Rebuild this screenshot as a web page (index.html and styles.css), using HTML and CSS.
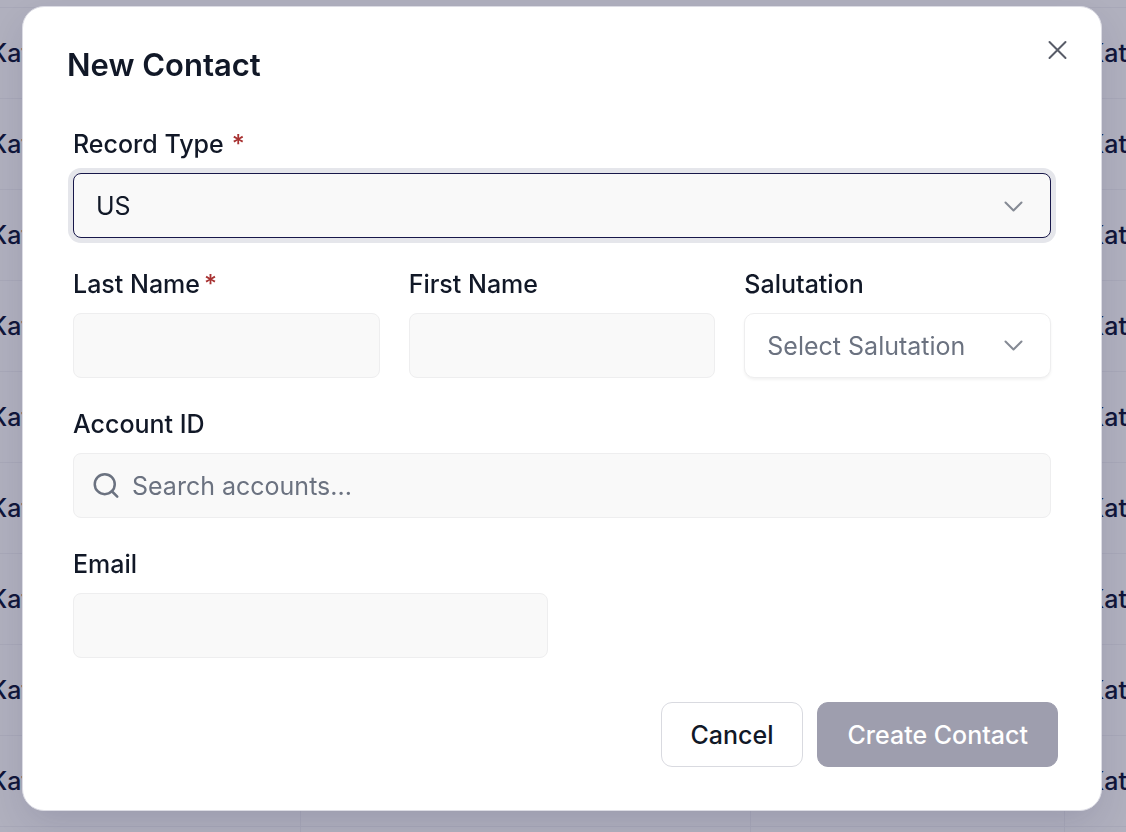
FILE: index.html
```html
<!DOCTYPE html>
<html lang="en">
<head>
<meta charset="utf-8">
<meta name="viewport" content="width=device-width, initial-scale=1">
<title>New Contact</title>
<link rel="stylesheet" href="styles.css">
</head>
<body>
<div class="page">
  <table class="records" aria-hidden="true">
    <colgroup><col class="col-first"><col class="col-wide"><col class="col-mid"><col class="col-last"></colgroup>
    <tbody>
      <tr><td>Kat</td><td></td><td></td><td>Kat</td></tr>
      <tr><td>Kat</td><td></td><td></td><td>Kat</td></tr>
      <tr><td>Kat</td><td></td><td></td><td>Kat</td></tr>
      <tr><td>Kat</td><td></td><td></td><td>Kat</td></tr>
      <tr><td>Kat</td><td></td><td></td><td>Kat</td></tr>
      <tr><td>Kat</td><td></td><td></td><td>Kat</td></tr>
      <tr><td>Kat</td><td></td><td></td><td>Kat</td></tr>
      <tr><td>Kat</td><td></td><td></td><td>Kat</td></tr>
      <tr><td>Kat</td><td></td><td></td><td>Kat</td></tr>
      <tr><td></td><td></td><td></td><td></td></tr>
    </tbody>
  </table>
</div>
<div class="overlay">
  <form class="dialog" role="dialog" aria-labelledby="dialog-title">
    <h1 class="title" id="dialog-title">New Contact</h1>
    <button class="close" type="button" aria-label="Close">
      <svg width="32" height="32" viewBox="0 0 32 32" fill="none" stroke="currentColor" stroke-width="2" stroke-linecap="round"><path d="M8.500 8l16 16M24.500 8l-16 16"/></svg>
    </button>
    <div class="fields">
      <div class="field">
        <label class="label" for="record-type">Record Type <span class="required">*</span></label>
        <div class="control">
          <select class="input focused" id="record-type"><option>US</option></select>
          <svg class="chevron" width="32" height="32" viewBox="0 0 32 32" fill="none" stroke="currentColor" stroke-width="2" stroke-linecap="round" stroke-linejoin="round"><path d="M8.500 12.500l8 8 8-8"/></svg>
        </div>
      </div>
      <div class="row thirds">
        <div class="field">
          <label class="label tight" for="last-name">Last Name<span class="required">*</span></label>
          <input class="input" id="last-name" type="text">
        </div>
        <div class="field">
          <label class="label" for="first-name">First Name</label>
          <input class="input" id="first-name" type="text">
        </div>
        <div class="field">
          <label class="label" for="salutation">Salutation</label>
          <div class="control">
            <select class="input plain" id="salutation"><option>Select Salutation</option></select>
            <svg class="chevron" width="32" height="32" viewBox="0 0 32 32" fill="none" stroke="currentColor" stroke-width="2" stroke-linecap="round" stroke-linejoin="round"><path d="M8.500 11.500l8 8 8-8"/></svg>
          </div>
        </div>
      </div>
      <div class="field">
        <label class="label" for="account">Account ID</label>
        <div class="control">
          <input class="input with-icon" id="account" type="text" placeholder="Search accounts...">
          <svg class="search" width="30" height="30" viewBox="0 0 24 24" fill="none" stroke="currentColor" stroke-width="2" stroke-linecap="round" stroke-linejoin="round"><circle cx="11" cy="10.500" r="8"/><path d="M21 20.500l-4.300-4.300"/></svg>
        </div>
      </div>
      <div class="row halves">
        <div class="field">
          <label class="label" for="email">Email</label>
          <input class="input" id="email" type="email">
        </div>
      </div>
    </div>
    <div class="actions">
      <button class="button secondary" type="button">Cancel</button>
      <button class="button primary" type="submit" disabled>Create Contact</button>
    </div>
  </form>
</div>
</body>
</html>
```
FILE: styles.css
```css
* { box-sizing: border-box; }
body {
  margin: 0;
  background: #b0b0be;
  color: #111827;
  font-family: Inter, "Liberation Sans", sans-serif;
  font-size: 25px;
}
.page {
  height: 100vh;
  overflow: hidden;
}
.records {
  table-layout: fixed;
  width: calc(100% + 160px);
  margin: 7px 0 0 -33px;
  border-collapse: collapse;
  color: #10163a;
}
.col-first { width: 333px; }
.col-wide { width: 450px; }
.col-mid { width: 314px; }
.records td {
  height: 91px;
  padding: 0 22px;
  border: 1px solid #a8a8b8;
  font-weight: 500;
}
.overlay {
  position: fixed;
  inset: 0;
  padding: 6px 24px 21px 22px;
  overflow: hidden;
}
.dialog {
  position: relative;
  padding: 40px 43px 43px 44px;
  border: 1px solid #dcdce4;
  border-radius: 22px;
  background: #fff;
  box-shadow: 0 14px 36px -6px rgba(30, 30, 80, 0.16);
}
.title {
  margin: 0 0 43px;
  font-size: 31px;
  line-height: 36px;
  font-weight: 600;
}
.close {
  position: absolute;
  top: 27px;
  right: 28px;
  width: 32px;
  height: 32px;
  padding: 0;
  border: 0;
  background: none;
  color: #585c68;
}
.fields {
  display: grid;
  gap: 28px;
  padding: 0 7px 0 6px;
}
.row {
  display: grid;
  gap: 29px;
}
.thirds { grid-template-columns: repeat(3, minmax(0, 1fr)); }
.halves { grid-template-columns: repeat(2, minmax(0, 1fr)); }
.field {
  display: grid;
  gap: 11px;
}
.label {
  display: flex;
  gap: 8px;
  line-height: 36px;
  font-weight: 500;
}
.tight { gap: 4px; }
.required { color: #a83232; }
.control {
  display: grid;
  align-items: center;
}
.control > * { grid-area: 1 / 1; }
.input {
  appearance: none;
  width: 100%;
  height: 65px;
  padding: 0 22px;
  border: 1px solid #eeeeef;
  border-radius: 8px;
  outline: 0;
  background: #f9f9f9;
  color: #111827;
  font: inherit;
}
.input::placeholder {
  color: #6b7280;
  opacity: 1;
}
.focused {
  border-color: #18184a;
  box-shadow: 0 0 0 5px #e5e6eb;
}
.plain {
  border-radius: 10px;
  background: #fff;
  color: #6b7280;
  box-shadow: 0 2px 3px rgba(0, 0, 0, 0.05);
}
.with-icon { padding-left: 58px; }
.chevron {
  justify-self: end;
  margin-right: 22px;
  color: #858a94;
  pointer-events: none;
}
.search {
  margin-left: 18px;
  color: #6b7280;
  pointer-events: none;
}
.actions {
  display: flex;
  justify-content: flex-end;
  gap: 14px;
  margin-top: 44px;
}
.button {
  height: 65px;
  padding: 0 29px;
  border: 1px solid #d9dae0;
  border-radius: 11px;
  font: inherit;
  font-weight: 500;
}
.secondary {
  background: #fff;
  color: #111827;
}
.primary {
  border-color: #9e9eae;
  background: #9e9eae;
  color: #fff;
}
```
